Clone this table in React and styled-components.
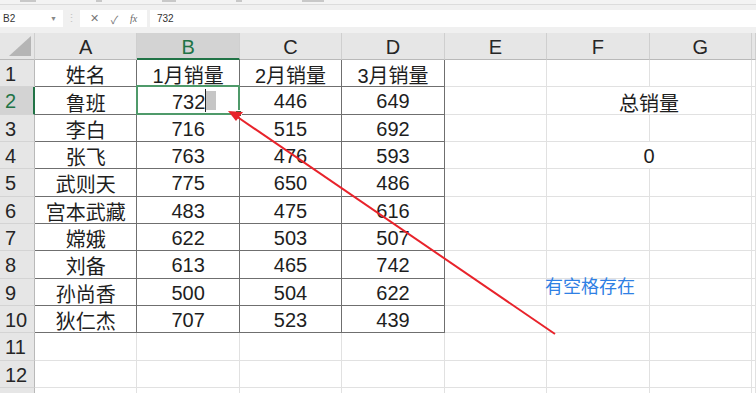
import React from "react";
import styled, { createGlobalStyle } from "styled-components";

const Global = createGlobalStyle`
  html, body { margin: 0; padding: 0; background: #ffffff; }
  body { font-family: "Liberation Sans", "Noto Sans CJK SC", sans-serif; overflow: hidden; }
`;

const Page = styled.div`
  position: relative;
  width: 756px;
  height: 393px;
  overflow: hidden;
  background: #f0f0f0;
`;

const Ribbon = styled.div`
  height: 4px;
  background: #f3f3f3;
  border-bottom: 1px solid #dcdcdc;
  display: flex;
  gap: 60px;
  padding-left: 20px;
  align-items: flex-start;
`;

const RibbonBit = styled.span`
  width: ${(p) => p.$w}px;
  height: 2px;
  background: #c8c8c8;
`;

const FormulaBar = styled.div`
  display: flex;
  align-items: stretch;
  height: 17px;
  margin-top: 5px;
  margin-bottom: 6px;
`;

const NameBox = styled.div`
  width: 63px;
  background: #ffffff;
  display: flex;
  align-items: center;
  justify-content: space-between;
  padding: 0 6px 0 3px;
  box-sizing: border-box;
  font-size: 10px;
  color: #333;
`;

const Caret = styled.span`
  font-size: 7px;
  color: #888;
`;

const Dots = styled.div`
  width: 17px;
  display: flex;
  align-items: center;
  justify-content: center;
  color: #c4c4c4;
  font-size: 11px;
`;

const Buttons = styled.div`
  width: 67px;
  background: #ffffff;
  display: flex;
  align-items: center;
  justify-content: space-around;
  padding: 0 4px;
  box-sizing: border-box;
  color: #777;
  font-size: 11px;
`;

const Fx = styled.span`
  font-family: "Liberation Serif", serif;
  font-style: italic;
  font-size: 10px;
  color: #666;
`;

const Input = styled.div`
  flex: 1;
  margin-left: 3px;
  background: #ffffff;
  display: flex;
  align-items: center;
  padding-left: 7px;
  font-size: 10px;
  color: #333;
`;

const Sheet = styled.div`
  display: grid;
  grid-template-columns: 35px repeat(7, 102.43px) 1fr;
  grid-template-rows: 27px repeat(13, 27.33px);
  background: #ffffff;
  font-size: 20px;
  color: #1e1e1e;
`;

const Head = styled.div`
  box-sizing: border-box;
  display: flex;
  align-items: center;
  justify-content: center;
  padding-top: 3px;
  background: ${(p) => (p.$active ? "#d3d3d3" : "#e6e6e6")};
  color: ${(p) => (p.$active ? "#217346" : "#262626")};
`;

const Corner = styled(Head)`
  position: relative;
  border-right: 1px solid #cfcfcf;
  border-bottom: 1px solid #b9b9b9;
  &::after {
    content: "";
    position: absolute;
    right: 3px;
    bottom: 3px;
    width: 22px;
    height: 20px;
    background: #b5b5b5;
    clip-path: polygon(100% 0, 100% 100%, 0 100%);
  }
`;

const ColHead = styled(Head)`
  border-right: 1px solid #cfcfcf;
  border-bottom: ${(p) => (p.$active ? "2px solid #217346" : "1px solid #b9b9b9")};
`;

const RowHead = styled(Head)`
  justify-content: flex-start;
  padding-left: 5px;
  border-bottom: 1px solid #d4d4d4;
  border-right: ${(p) => (p.$active ? "2px solid #217346" : "1px solid #b9b9b9")};
`;

const Cell = styled.div`
  position: relative;
  box-sizing: border-box;
  display: flex;
  align-items: center;
  justify-content: center;
  padding-top: 3px;
  grid-column: ${(p) => (p.$span ? `span ${p.$span}` : "auto")};
  border-right: 1px solid ${(p) => (p.$table ? "#6f6f6f" : "#e1e1e1")};
  border-bottom: 1px solid ${(p) => (p.$table ? "#6f6f6f" : "#e1e1e1")};
  white-space: nowrap;
`;

const Selection = styled.div`
  position: absolute;
  left: -1px;
  top: -2px;
  right: -1px;
  bottom: -1px;
  border: 2px solid #4f9a6a;
  pointer-events: none;
  z-index: 2;
  &::after {
    content: "";
    position: absolute;
    right: -4px;
    bottom: -4px;
    width: 5px;
    height: 5px;
    background: #217346;
    border: 1px solid #ffffff;
  }
`;

const EditText = styled.span`
  display: flex;
  align-items: stretch;
  height: 100%;
  margin-top: -3px;
  padding-left: 12px;
`;

const Digits = styled.span`
  display: flex;
  align-items: center;
  padding-top: 3px;
  border-right: 1px solid #222;
`;

const SpaceMark = styled.span`
  width: 10px;
  margin: 2px 0;
  background: #c6c6c6;
`;

const Note = styled.div`
  position: absolute;
  left: 545px;
  top: 274px;
  font-size: 18px;
  color: #2f80e4;
  font-family: "Noto Sans CJK SC", sans-serif;
  line-height: 22px;
`;

const Overlay = styled.svg`
  position: absolute;
  left: 0;
  top: 0;
  pointer-events: none;
  z-index: 5;
`;

const cols = ["A", "B", "C", "D", "E", "F", "G", ""];

const data = [
  ["姓名", "1月销量", "2月销量", "3月销量"],
  ["鲁班", "732", "446", "649"],
  ["李白", "716", "515", "692"],
  ["张飞", "763", "476", "593"],
  ["武则天", "775", "650", "486"],
  ["宫本武藏", "483", "475", "616"],
  ["嫦娥", "622", "503", "507"],
  ["刘备", "613", "465", "742"],
  ["孙尚香", "500", "504", "622"],
  ["狄仁杰", "707", "523", "439"],
];

const side = { 2: "总销量", 4: "0" };

function Row({ n }) {
  const rowData = data[n - 1];
  const cells = [];
  for (let c = 0; c < 4; c++) {
    const value = rowData ? rowData[c] : "";
    if (n === 2 && c === 1) {
      cells.push(
        <Cell key={c} $table>
          <EditText>
            <Digits>{value}</Digits>
            <SpaceMark />
          </EditText>
          <Selection />
        </Cell>
      );
    } else {
      cells.push(
        <Cell key={c} $table={!!rowData}>
          {value}
        </Cell>
      );
    }
  }
  cells.push(<Cell key="e" />);
  if (side[n]) {
    cells.push(
      <Cell key="fg" $span={2}>
        {side[n]}
      </Cell>
    );
  } else {
    cells.push(<Cell key="f" />, <Cell key="g" />);
  }
  cells.push(<Cell key="h" />);
  return (
    <>
      <RowHead $active={n === 2}>{n < 13 ? n : ""}</RowHead>
      {cells}
    </>
  );
}

export default function App() {
  const rows = Array.from({ length: 13 }, (_, i) => i + 1);
  return (
    <Page>
      <Global />
      <Ribbon>
        <RibbonBit $w={16} />
        <RibbonBit $w={6} />
        <RibbonBit $w={14} />
        <RibbonBit $w={6} />
        <RibbonBit $w={22} />
      </Ribbon>
      <FormulaBar>
        <NameBox>
          B2 <Caret>▼</Caret>
        </NameBox>
        <Dots>⋮</Dots>
        <Buttons>
          <span>✕</span>
          <span>✓</span>
          <Fx>fx</Fx>
        </Buttons>
        <Input>732</Input>
      </FormulaBar>
      <Sheet>
        <Corner />
        {cols.map((c) => (
          <ColHead key={c || "x"} $active={c === "B"}>
            {c}
          </ColHead>
        ))}
        {rows.map((n) => (
          <Row key={n} n={n} />
        ))}
      </Sheet>
      <Note>有空格存在</Note>
      <Overlay width="756" height="393" viewBox="0 0 756 393">
        <line x1="555" y1="334" x2="236" y2="116" stroke="#e8232b" strokeWidth="2" />
        <polygon points="228,111 243,112 236,121" fill="#e8232b" />
      </Overlay>
    </Page>
  );
}
